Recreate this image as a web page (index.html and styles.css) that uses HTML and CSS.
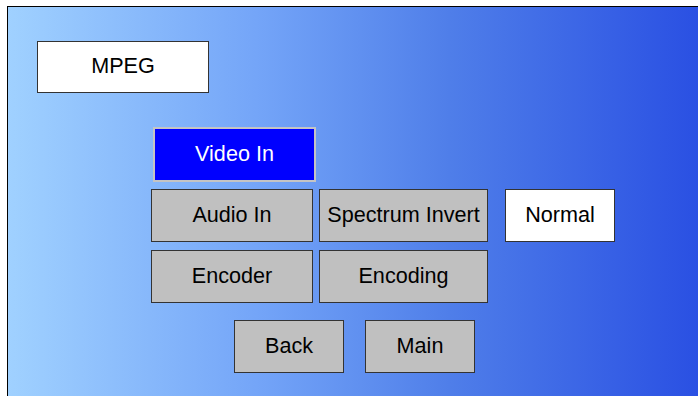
FILE: index.html
```html
<!DOCTYPE html>
<html lang="en">
<head>
    <meta charset="UTF-8">
    <meta name="viewport" content="width=device-width, initial-scale=1.0">
    <title>MPEG</title>
    <link rel="stylesheet" href="styles.css">
</head>
<body>
    <div class="panel">
        <div class="title">MPEG</div>

        <div class="controls">
            <div class="row row-top">
                <div class="btn btn-active">Video In</div>
            </div>
            <div class="row">
                <div class="btn btn-wide">Audio In</div>
                <div class="btn btn-wider">Spectrum Invert</div>
                <div class="value">Normal</div>
            </div>
            <div class="row">
                <div class="btn btn-wide">Encoder</div>
                <div class="btn btn-wider">Encoding</div>
            </div>
            <div class="row row-nav">
                <div class="btn btn-small">Back</div>
                <div class="btn btn-small">Main</div>
            </div>
        </div>
    </div>
</body>
</html>
```

FILE: styles.css
```css
* {
    box-sizing: border-box;
}

body {
    margin: 0;
    background-color: #fff;
    font-family: 'Liberation Sans', Arial, sans-serif;
    font-size: 21.6px;
    overflow: hidden;
}

.panel {
    margin: 6px 0 0 7px;
    height: 400px;
    border-top: 1px solid #000;
    border-left: 1px solid #000;
    background: linear-gradient(to right, #a0d1ff 0%, #74a5f8 36%, #4f7ee9 64%, #2a50e3 100%);
    padding: 34px 0 0 29px;
}

.title {
    width: 172px;
    height: 52px;
    padding-bottom: 2px;
    background-color: #fff;
    border: 1px solid #333;
    display: flex;
    align-items: center;
    justify-content: center;
    color: #000;
}

.controls {
    margin: 34px 0 0 114px;
}

.row {
    display: flex;
    margin-bottom: 8px;
}

.row-top {
    margin-bottom: 7px;
    padding-left: 2px;
}

.row-nav {
    margin-top: 17px;
    padding-left: 83px;
}

.btn,
.value {
    height: 53px;
    padding-bottom: 2px;
    display: flex;
    align-items: center;
    justify-content: center;
    background-color: #c0c0c0;
    border: 1px solid #333;
    color: #000;
}

.btn-active {
    width: 163px;
    height: 55px;
    background-color: #0000ff;
    border: 2px solid #c4c4c4;
    color: #fff;
}

.btn-wide {
    width: 162px;
    margin-right: 6px;
}

.btn-wider {
    width: 169px;
    margin-right: 17px;
}

.value {
    width: 110px;
    background-color: #fff;
}

.btn-small {
    width: 110px;
    margin-right: 21px;
}
```
